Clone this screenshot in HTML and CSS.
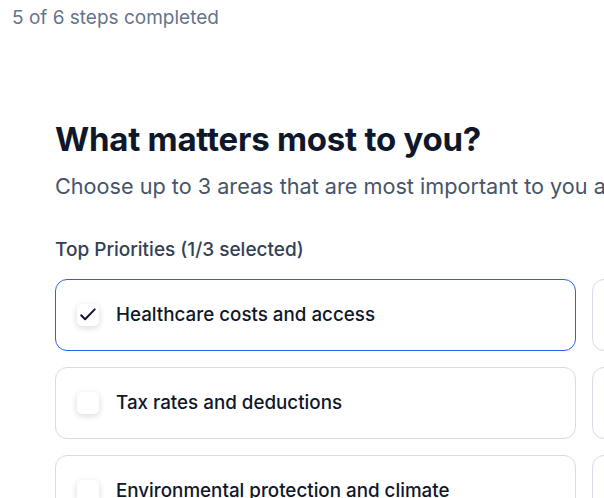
FILE: index.html
```html
<!DOCTYPE html>
<html lang="en">
<head>
<meta charset="utf-8">
<link rel="stylesheet" href="styles.css">
</head>
<body>
  <div class="progress-text">5 of 6 steps completed</div>
  <main class="step">
    <h1 class="title">What matters most to you?</h1>
    <p class="subtitle">Choose up to 3 areas that are most important to you and your household.</p>
    <div class="group-label">Top Priorities (1/3 selected)</div>
    <div class="options">
      <label class="option selected">
        <span class="box">
          <svg viewBox="0 0 22 22" width="22" height="22"><path d="M4.2 11.3l3.9 3.9 9.6-9.8" fill="none" stroke="#0f172a" stroke-width="2" stroke-linecap="round" stroke-linejoin="round"/></svg>
        </span>
        <span class="option-text">Healthcare costs and access</span>
      </label>
      <label class="option">
        <span class="box"></span>
        <span class="option-text">Education quality</span>
      </label>
      <label class="option">
        <span class="box"></span>
        <span class="option-text">Tax rates and deductions</span>
      </label>
      <label class="option">
        <span class="box"></span>
        <span class="option-text">Housing affordability</span>
      </label>
      <label class="option">
        <span class="box"></span>
        <span class="option-text">Environmental protection and climate</span>
      </label>
      <label class="option">
        <span class="box"></span>
        <span class="option-text">Public safety</span>
      </label>
    </div>
  </main>
</body>
</html>
```
FILE: styles.css
```css
* { box-sizing: border-box; }
html, body { margin: 0; padding: 0; }
body {
  background: #ffffff;
  font-family: Inter, "Noto Sans", sans-serif;
  overflow: hidden;
  width: 604px;
  height: 498px;
}
.progress-text {
  padding: 6px 12px 0;
  font-size: 19px;
  line-height: 24px;
  color: #64748b;
}
.step {
  padding: 89px 0 0 55px;
  width: 1200px;
}
.title {
  margin: 0;
  font-size: 33px;
  line-height: 40px;
  font-weight: 700;
  color: #0f172a;
  letter-spacing: -0.25px;
}
.subtitle {
  margin: 13px 0 0;
  font-size: 21.65px;
  line-height: 28px;
  color: #475569;
  white-space: nowrap;
}
.group-label {
  margin-top: 38px;
  font-size: 19px;
  line-height: 24px;
  font-weight: 500;
  color: #334155;
}
.options {
  margin-top: 17px;
  display: grid;
  grid-template-columns: 521px 521px;
  gap: 16px 16px;
}
.option {
  display: flex;
  align-items: center;
  gap: 17px;
  height: 72px;
  padding: 0 21px;
  border: 1px solid #d5dce6;
  border-radius: 12px;
  background: #fff;
}
.option.selected {
  border-color: #2563eb;
}
.box {
  width: 22px;
  height: 22px;
  border-radius: 5px;
  background: #fff;
  box-shadow: 0 2px 6px rgba(15, 23, 42, 0.16);
  display: flex;
  align-items: center;
  justify-content: center;
  flex: none;
}
.option-text {
  font-size: 18.8px;
  line-height: 28px;
  font-weight: 500;
  color: #0f172a;
}
```
